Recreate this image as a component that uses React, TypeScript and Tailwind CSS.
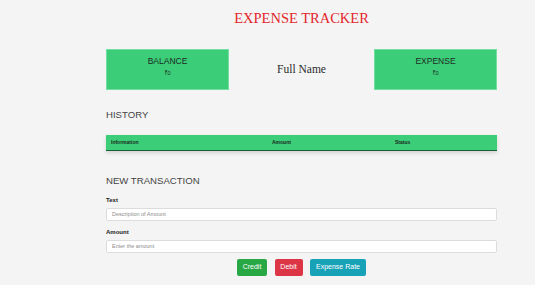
import React from 'react'

// ─── Expense tracker page ─────────────────────────────────────────────────────

const sans = { fontFamily: '"Liberation Sans", "Noto Sans", Arial, sans-serif' }

function StatCard({ title }: { title: string }) {
  return (
    <div className="w-[123px] h-[41px] bg-[#3bcd78] border border-[#74dda0] flex flex-col items-center pt-[7px]">
      <div className="text-[8.5px] leading-none text-[#1f2a24]">{title}</div>
      <div className="mt-[5px] text-[5.5px] leading-none text-[#1f2a24]">₹0</div>
    </div>
  )
}

function Field({ label, placeholder, className }: { label: string; placeholder: string; className?: string }) {
  return (
    <div className={className}>
      <div className="text-[6px] leading-none font-bold text-[#222]">{label}</div>
      <input
        placeholder={placeholder}
        className="mt-[5px] block w-full h-[13px] bg-white border border-[#dcdcdc] rounded-[2px] px-[5px] text-[5.5px] text-[#333] placeholder:text-[#8a8a8a] outline-none"
      />
    </div>
  )
}

export default function App() {
  return (
    <div className="min-h-screen w-full bg-[#f4f4f4] text-[#333]" style={sans}>
      <div className="ml-[106px] w-[391px] flex flex-col">
        <div
          className="h-[37px] flex items-center justify-center text-[14.5px] leading-none text-[#e3262b]"
          style={{ fontFamily: '"Liberation Serif", "Times New Roman", serif' }}
        >
          EXPENSE TRACKER
        </div>

        <div className="mt-[12px] flex items-center justify-between">
          <StatCard title="BALANCE" />
          <div
            className="text-[11.5px] leading-none text-[#2b2b2b]"
            style={{ fontFamily: '"Liberation Serif", "Times New Roman", serif' }}
          >
            Full Name
          </div>
          <StatCard title="EXPENSE" />
        </div>

        <h2 className="mt-[19.5px] text-[9.6px] leading-none text-[#444]">HISTORY</h2>

        <div className="mt-[16px] h-[16px] bg-[#3bcd78] border-b border-[#1d5e37] shadow-[0_2px_4px_rgba(0,0,0,0.14)] grid grid-cols-[161px_123px_1fr] items-center text-[5px] font-bold text-[#1c2a22]">
          <div className="px-[5px]">Information</div>
          <div className="px-[5px]">Amount</div>
          <div className="px-[5px]">Status</div>
        </div>

        <h2 className="mt-[24.5px] text-[9.6px] leading-none text-[#444]">NEW TRANSACTION</h2>

        <Field className="mt-[11.5px]" label="Text" placeholder="Description of Amount" />
        <Field className="mt-[8px]" label="Amount" placeholder="Enter the amount" />

        <div className="mt-[6px] flex justify-center gap-[7.5px] text-[7px] text-white">
          <button className="w-[30px] h-[17px] rounded-[2px] bg-[#28a745]">Credit</button>
          <button className="w-[28px] h-[17px] rounded-[2px] bg-[#dc3545]">Debit</button>
          <button className="w-[56px] h-[17px] rounded-[2px] bg-[#17a2b8]">Expense Rate</button>
        </div>
      </div>
    </div>
  )
}
